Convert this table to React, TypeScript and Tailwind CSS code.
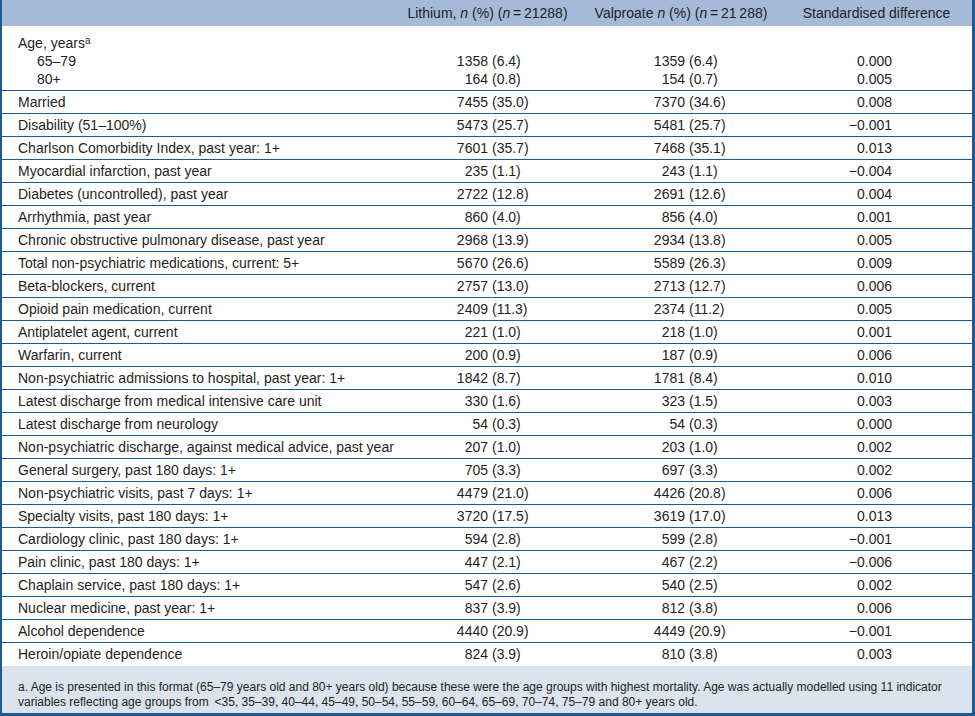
const rows: [string, string, string, string, string, string][] = [
  ["Married", "7455", "(35.0)", "7370", "(34.6)", "0.008"],
  ["Disability (51–100%)", "5473", "(25.7)", "5481", "(25.7)", "\u22120.001"],
  ["Charlson Comorbidity Index, past year: 1+", "7601", "(35.7)", "7468", "(35.1)", "0.013"],
  ["Myocardial infarction, past year", "235", "(1.1)", "243", "(1.1)", "\u22120.004"],
  ["Diabetes (uncontrolled), past year", "2722", "(12.8)", "2691", "(12.6)", "0.004"],
  ["Arrhythmia, past year", "860", "(4.0)", "856", "(4.0)", "0.001"],
  ["Chronic obstructive pulmonary disease, past year", "2968", "(13.9)", "2934", "(13.8)", "0.005"],
  ["Total non-psychiatric medications, current: 5+", "5670", "(26.6)", "5589", "(26.3)", "0.009"],
  ["Beta-blockers, current", "2757", "(13.0)", "2713", "(12.7)", "0.006"],
  ["Opioid pain medication, current", "2409", "(11.3)", "2374", "(11.2)", "0.005"],
  ["Antiplatelet agent, current", "221", "(1.0)", "218", "(1.0)", "0.001"],
  ["Warfarin, current", "200", "(0.9)", "187", "(0.9)", "0.006"],
  ["Non-psychiatric admissions to hospital, past year: 1+", "1842", "(8.7)", "1781", "(8.4)", "0.010"],
  ["Latest discharge from medical intensive care unit", "330", "(1.6)", "323", "(1.5)", "0.003"],
  ["Latest discharge from neurology", "54", "(0.3)", "54", "(0.3)", "0.000"],
  ["Non-psychiatric discharge, against medical advice, past year", "207", "(1.0)", "203", "(1.0)", "0.002"],
  ["General surgery, past 180 days: 1+", "705", "(3.3)", "697", "(3.3)", "0.002"],
  ["Non-psychiatric visits, past 7 days: 1+", "4479", "(21.0)", "4426", "(20.8)", "0.006"],
  ["Specialty visits, past 180 days: 1+", "3720", "(17.5)", "3619", "(17.0)", "0.013"],
  ["Cardiology clinic, past 180 days: 1+", "594", "(2.8)", "599", "(2.8)", "\u22120.001"],
  ["Pain clinic, past 180 days: 1+", "447", "(2.1)", "467", "(2.2)", "\u22120.006"],
  ["Chaplain service, past 180 days: 1+", "547", "(2.6)", "540", "(2.5)", "0.002"],
  ["Nuclear medicine, past year: 1+", "837", "(3.9)", "812", "(3.8)", "0.006"],
  ["Alcohol dependence", "4440", "(20.9)", "4449", "(20.9)", "\u22120.001"],
  ["Heroin/opiate dependence", "824", "(3.9)", "810", "(3.8)", "0.003"],
];

const num = "font-['Liberation_Sans_Narrow','Liberation_Sans',sans-serif]";

function Pair({ n, p, w }: { n: string; p: string; w: string }) {
  return (
    <div className={`flex ${num}`}>
      <span className={`${w} text-right`}>{n}</span>
      <span className="pl-[4px]">{p}</span>
    </div>
  );
}

export default function App() {
  return (
    <div className="w-[975px] h-[716px] bg-white font-['Liberation_Sans',Arial,sans-serif] text-[14px] text-[#231f20]">
      <div className="border-l-2 border-r-[3px] border-b-[3px] border-[#1b5a93]">
        {/* header */}
        <div className="grid grid-cols-[398px_175px_212px_185px] h-[26px] items-center bg-[#a4bad8]">
          <div />
          <div className="text-center whitespace-nowrap">
            Lithium, <i>n</i> (%) (<i>n</i>{"\u2009=\u2009"}21288)
          </div>
          <div className="text-center whitespace-nowrap">
            Valproate <i>n</i> (%) (<i>n</i>{"\u2009=\u2009"}21{"\u2009"}288)
          </div>
          <div className="text-center whitespace-nowrap pr-[6px]">Standardised difference</div>
        </div>

        {/* age group */}
        <div className="grid grid-cols-[398px_175px_212px_185px] h-[65px] pt-[8px] border-b border-[#1b5a93] leading-[18px]">
          <div className="pl-4">
            <div className="h-[18px]">
              Age, years<span className="text-[10px] leading-none relative -top-[4px]">a</span>
            </div>
            <div className="pl-[19px]">65–79</div>
            <div className="pl-[19px]">80+</div>
          </div>
          <div className="pt-[18px]">
            <Pair n="1358" p="(6.4)" w="w-[88px]" />
            <Pair n="164" p="(0.8)" w="w-[88px]" />
          </div>
          <div className="pt-[18px]">
            <Pair n="1359" p="(6.4)" w="w-[110px]" />
            <Pair n="154" p="(0.7)" w="w-[110px]" />
          </div>
          <div className={`pt-[18px] ${num}`}>
            <div className="w-[105px] text-right">0.000</div>
            <div className="w-[105px] text-right">0.005</div>
          </div>
        </div>

        {rows.map((r, i) => (
          <div
            key={r[0]}
            className={`grid grid-cols-[398px_175px_212px_185px] h-[23px] items-center ${
              i < rows.length - 1 ? "border-b border-[#1b5a93]" : ""
            }`}
          >
            <div className="pl-4 whitespace-nowrap">{r[0]}</div>
            <Pair n={r[1]} p={r[2]} w="w-[88px]" />
            <Pair n={r[3]} p={r[4]} w="w-[110px]" />
            <div className={`w-[105px] text-right ${num}`}>{r[5]}</div>
          </div>
        ))}

        {/* footnote */}
        <div className="h-[47px] bg-[#dbe3ee] pl-4 pt-[14px] text-[12px] leading-[15px] whitespace-nowrap">
          a. Age is presented in this format (65–79 years old and 80+ years old) because these were the age groups with
          highest mortality. Age was actually modelled using 11 indicator
          <br />
          variables reflecting age groups from {"\u2009<"}35, 35–39, 40–44, 45–49, 50–54, 55–59, 60–64, 65–69, 70–74,
          75–79 and 80+ years old.
        </div>
      </div>
    </div>
  );
}
